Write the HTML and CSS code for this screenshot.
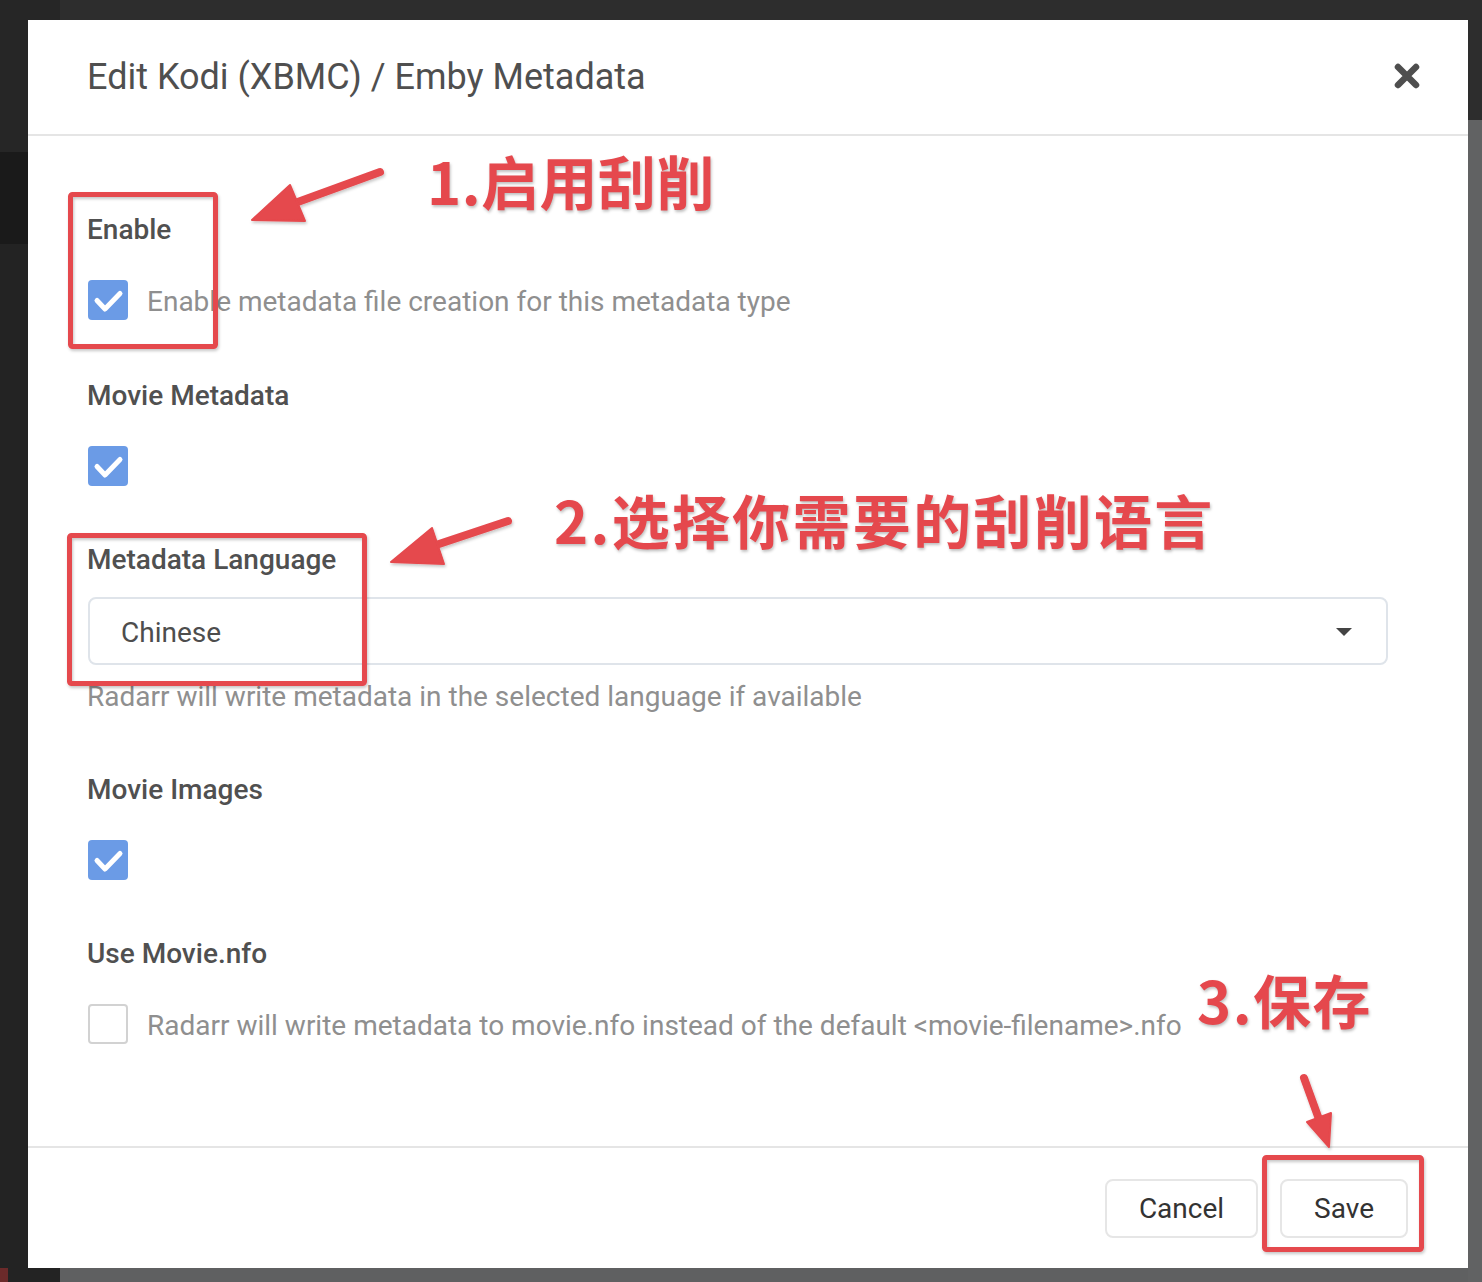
FILE: index.html
```html
<!DOCTYPE html>
<html lang="en">
<head>
<meta charset="utf-8">
<title>Edit Kodi (XBMC) / Emby Metadata</title>
<link rel="stylesheet" href="styles.css">
</head>
<body>
<div class="modal">
  <div class="modal-header">
    <h1 class="modal-title">Edit Kodi (XBMC) / Emby Metadata</h1>
    <button class="close" aria-label="Close">
      <svg width="26" height="26" viewBox="0 0 26 26"><path d="M4 4 L22 22 M22 4 L4 22" stroke="#4e4e4e" stroke-width="6.5" stroke-linecap="round" fill="none"/></svg>
    </button>
  </div>
  <div class="modal-body">
    <div class="group">
      <div class="label">Enable</div>
      <div class="check-row">
        <span class="checkbox checked"><svg width="40" height="40" viewBox="0 0 40 40"><path d="M9 20.5 L17 29 L32 13.5" stroke="#fff" stroke-width="5" stroke-linecap="round" stroke-linejoin="round" fill="none"/></svg></span>
        <span class="check-text">Enable metadata file creation for this metadata type</span>
      </div>
    </div>
    <div class="group">
      <div class="label">Movie Metadata</div>
      <div class="check-row">
        <span class="checkbox checked"><svg width="40" height="40" viewBox="0 0 40 40"><path d="M9 20.5 L17 29 L32 13.5" stroke="#fff" stroke-width="5" stroke-linecap="round" stroke-linejoin="round" fill="none"/></svg></span>
      </div>
    </div>
    <div class="group">
      <div class="label label-select">Metadata Language</div>
      <div class="select">
        <span>Chinese</span>
        <span class="caret"></span>
      </div>
      <div class="help">Radarr will write metadata in the selected language if available</div>
    </div>
    <div class="group">
      <div class="label">Movie Images</div>
      <div class="check-row">
        <span class="checkbox checked"><svg width="40" height="40" viewBox="0 0 40 40"><path d="M9 20.5 L17 29 L32 13.5" stroke="#fff" stroke-width="5" stroke-linecap="round" stroke-linejoin="round" fill="none"/></svg></span>
      </div>
    </div>
    <div class="group">
      <div class="label">Use Movie.nfo</div>
      <div class="check-row">
        <span class="checkbox"></span>
        <span class="check-text">Radarr will write metadata to movie.nfo instead of the default &lt;movie-filename&gt;.nfo</span>
      </div>
    </div>
  </div>
  <div class="modal-footer">
    <button class="btn">Cancel</button>
    <button class="btn">Save</button>
  </div>
</div>

<svg class="marks" width="1482" height="1282" viewBox="0 0 1482 1282">
  <defs>
    <filter id="sh" x="-20%" y="-20%" width="140%" height="140%">
      <feDropShadow dx="1" dy="2" stdDeviation="1.5" flood-color="#000" flood-opacity="0.22"/>
    </filter>
  </defs>
  <g filter="url(#sh)" fill="none" stroke="#e5484d" stroke-width="5" stroke-linejoin="round">
    <rect x="70.5" y="194.5" width="145" height="152" rx="2"/>
    <rect x="69.5" y="535.5" width="295" height="148" rx="2"/>
    <rect x="1264.5" y="1157.5" width="157" height="92" rx="2"/>
  </g>
  <g filter="url(#sh)" fill="#e5484d" stroke="#e5484d" stroke-linecap="round" stroke-linejoin="round">
    <line x1="380" y1="172" x2="295" y2="203" stroke-width="8"/>
    <polygon points="252,220 290,185 305,221" stroke-width="2"/>
    <line x1="508" y1="521" x2="430" y2="547" stroke-width="8"/>
    <polygon points="391,562 432,528 444,564" stroke-width="2"/>
    <line x1="1304" y1="1078" x2="1320" y2="1122" stroke-width="8"/>
    <polygon points="1329,1147 1307,1122 1331,1113" stroke-width="2"/>
  </g>
</svg>
<div class="note note1">1.启用刮削</div>
<div class="note note2">2.选择你需要的刮削语言</div>
<div class="note note3">3.保存</div>
</body>
</html>
```
FILE: styles.css
```css
html, body {
  margin: 0;
  padding: 0;
}
body {
  width: 1482px;
  height: 1282px;
  overflow: hidden;
  position: relative;
  box-sizing: border-box;
  padding: 20px 14px 14px 28px;
  font-family: Roboto, "Liberation Sans", Arial, sans-serif;
  background:
    linear-gradient(#2d2d2d 0 120px, #616263 120px) right top / 14px 100% no-repeat,
    linear-gradient(to right, #6b2a2a 0 8px, #232323 8px 60px, #5f6061 60px) left bottom / 100% 14px no-repeat,
    linear-gradient(to right, #262626 0 60px, #2d2d2d 60px) left top / 100% 20px no-repeat,
    linear-gradient(#262626 0 152px, #1a1a1a 152px 244px, #232323 244px) left top / 28px 100% no-repeat,
    #232323;
}
.modal {
  width: 1440px;
  height: 1248px;
  background: #fff;
  display: flex;
  flex-direction: column;
}
.modal-header {
  height: 114px;
  border-bottom: 2px solid #e5e5e5;
  display: flex;
  align-items: center;
  justify-content: space-between;
  padding: 0 46px 0 60px;
}
.modal-title {
  margin: 0;
  font-size: 36px;
  font-weight: 400;
  color: #4f4f4f;
  line-height: 40px;
  margin-left: -1px;
}
.close {
  border: 0;
  background: none;
  padding: 0;
  width: 26px;
  height: 26px;
  display: flex;
  margin-bottom: 2px;
  margin-right: 2px;
}
.modal-body {
  flex: 1;
  padding: 74px 80px 0 60px;
}
.group {
  margin-bottom: 54px;
}
.group:first-child {
  margin-bottom: 56px;
}
.label {
  font-size: 28px;
  font-weight: 500;
  color: #505050;
  line-height: 40px;
  margin-bottom: 30px;
  margin-left: -1px;
}
.label-select {
  margin-bottom: 17px;
}
.check-row {
  display: flex;
  align-items: center;
  gap: 20px;
  height: 40px;
}
.checkbox {
  width: 40px;
  height: 40px;
  box-sizing: border-box;
  border-radius: 4px;
  border: 2px solid #d2d2d2;
  background: #fff;
  flex: none;
  display: block;
}
.checkbox.checked {
  border: 0;
  background: #6b9be6;
}
.checkbox svg {
  display: block;
}
.check-text {
  font-size: 28px;
  color: #8f8f8f;
  line-height: 40px;
  padding-top: 4px;
  margin-left: -1px;
}
.select {
  height: 68px;
  box-sizing: border-box;
  border: 2px solid #dfe4ea;
  border-radius: 8px;
  display: flex;
  align-items: center;
  justify-content: space-between;
  padding: 2px 34px 0 31px;
  font-size: 28px;
  color: #4d4d4d;
}
.caret {
  width: 0;
  height: 0;
  border-left: 8px solid transparent;
  border-right: 8px solid transparent;
  border-top: 8px solid #444;
  margin-top: 0;
}
.help {
  margin-top: 11px;
  font-size: 28px;
  color: #8f8f8f;
  line-height: 40px;
  padding-top: 1px;
  margin-bottom: -1px;
  margin-left: -1px;
}
.modal-footer {
  height: 120px;
  border-top: 2px solid #e5e5e5;
  display: flex;
  align-items: center;
  justify-content: flex-end;
  gap: 22px;
  padding: 0 60px 0 0;
}
.btn {
  height: 59px;
  box-sizing: border-box;
  border: 2px solid #e6e6e6;
  border-radius: 8px;
  background: #fff;
  font-family: Roboto, "Liberation Sans", Arial, sans-serif;
  font-size: 28px;
  color: #333;
  padding: 0 32px;
}
.marks {
  position: absolute;
  left: 0;
  top: 0;
  pointer-events: none;
}
.note {
  position: absolute;
  font-family: "Noto Sans CJK SC", "Noto Sans", sans-serif;
  font-weight: 700;
  font-size: 58px;
  line-height: 58px;
  color: #e5484d;
  white-space: nowrap;
  text-shadow: 1px 2px 3px rgba(0, 0, 0, 0.25);
}
.note1 { left: 427px; top: 151px; letter-spacing: 0.5px; }
.note2 { left: 554px; top: 490px; letter-spacing: 2.3px; }
.note3 { left: 1197px; top: 970px; letter-spacing: 1.5px; }
```
